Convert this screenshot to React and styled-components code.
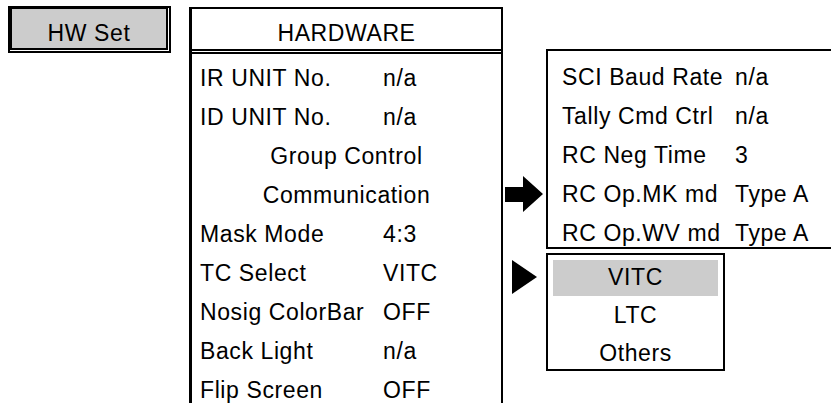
import React from 'react';
import styled, { createGlobalStyle } from 'styled-components';

const GlobalStyle = createGlobalStyle`
  html, body {
    margin: 0;
    padding: 0;
    background: #ffffff;
    overflow: hidden;
  }
  body {
    font-family: 'Liberation Sans', Arial, sans-serif;
    color: #000000;
  }
`;

const Page = styled.div`
  display: flex;
  align-items: flex-start;
  width: 831px;
  height: 403px;
  box-sizing: border-box;
  padding: 6px 0 0 8px;
  overflow: hidden;
  font-size: 23px;
  letter-spacing: 0.6px;
`;

const SetButton = styled.div`
  flex-shrink: 0;
  width: 163px;
  height: 47px;
  box-sizing: border-box;
  border: 2px solid #000;
  padding: 0 1px 1px 0;
  background: #ffffff;
`;

const SetFace = styled.div`
  height: 100%;
  box-sizing: border-box;
  border-style: solid;
  border-color: #000;
  border-width: 1px 2px 2px 2px;
  background: #cccccc;
  padding-top: 9px;
  line-height: 30px;
  text-align: center;
`;

const Panel = styled.section`
  flex-shrink: 0;
  width: 314px;
  margin: 1px 0 0 18px;
  box-sizing: border-box;
  border: 2px solid #000;
  border-left-width: 3px;
`;

const PanelHead = styled.div`
  height: 45px;
  box-sizing: border-box;
  padding-top: 8px;
  line-height: 32px;
  text-align: center;
  border-bottom: 5px double #000;
`;

const PanelBody = styled.div`
  padding-top: 5px;
`;

const Row = styled.div`
  display: flex;
  height: 39px;
  line-height: 39px;
  white-space: nowrap;
  padding-left: ${(p) => p.$indent || 0}px;
  justify-content: ${(p) => (p.$center ? 'center' : 'flex-start')};
`;

const Label = styled.span`
  flex-shrink: 0;
  width: ${(p) => p.$width}px;
`;

const Value = styled.span``;

const RightColumn = styled.div`
  display: flex;
  flex-direction: column;
  margin-top: 43px;
`;

const Group = styled.div`
  display: flex;
  align-items: flex-start;
  margin-bottom: ${(p) => p.$gap || 0}px;
`;

const MarkerCol = styled.div`
  flex-shrink: 0;
  width: 43px;
  display: flex;
  flex-direction: column;
  padding-top: ${(p) => p.$top}px;
`;

const Slot = styled.div`
  height: ${(p) => p.$h}px;
  display: flex;
  align-items: center;
  padding-left: ${(p) => p.$left || 0}px;
`;

const SubBox = styled.div`
  flex-shrink: 0;
  width: 300px;
  height: 200px;
  box-sizing: border-box;
  border: 2px solid #000;
  padding: 7px 0 0 14px;
`;

const Dropdown = styled.div`
  flex-shrink: 0;
  width: 179px;
  height: 118px;
  box-sizing: border-box;
  border: 2px solid #000;
  padding: 5px;
  display: flex;
  flex-direction: column;
  gap: 2px;
`;

const Option = styled.div`
  flex-shrink: 0;
  height: 36px;
  line-height: 35px;
  text-align: center;
  background: ${(p) => (p.$active ? '#cccccc' : 'transparent')};
`;

const BlockArrow = () => (
  <svg width="38" height="36" viewBox="0 0 38 36">
    <path d="M0 11 H18 V0 L38 18 L18 36 V26 H0 Z" fill="#000" />
  </svg>
);

const Triangle = () => (
  <svg width="25" height="34" viewBox="0 0 25 34">
    <path d="M0 0 L25 17 L0 34 Z" fill="#000" />
  </svg>
);

const hardware = [
  { label: 'IR UNIT No.', value: 'n/a' },
  { label: 'ID UNIT No.', value: 'n/a' },
  { label: 'Group Control', center: true },
  { label: 'Communication', center: true },
  { label: 'Mask Mode', value: '4:3' },
  { label: 'TC Select', value: 'VITC' },
  { label: 'Nosig ColorBar', value: 'OFF' },
  { label: 'Back Light', value: 'n/a' },
  { label: 'Flip Screen', value: 'OFF' },
];

const communication = [
  { label: 'SCI Baud Rate', value: 'n/a' },
  { label: 'Tally Cmd Ctrl', value: 'n/a' },
  { label: 'RC Neg Time', value: '3' },
  { label: 'RC Op.MK md', value: 'Type A' },
  { label: 'RC Op.WV md', value: 'Type A' },
];

const tcOptions = ['VITC', 'LTC', 'Others'];

const App = () => {
  return (
    <>
      <GlobalStyle />
      <Page>
        <SetButton>
          <SetFace>HW Set</SetFace>
        </SetButton>

        <Panel>
          <PanelHead>HARDWARE</PanelHead>
          <PanelBody>
            {hardware.map((item) =>
              item.center ? (
                <Row key={item.label} $center>
                  {item.label}
                </Row>
              ) : (
                <Row key={item.label} $indent={8}>
                  <Label $width={183}>{item.label}</Label>
                  <Value>{item.value}</Value>
                </Row>
              )
            )}
          </PanelBody>
        </Panel>

        <RightColumn>
          <Group $gap={1}>
            <MarkerCol $top={8}>
              {communication.map((item, i) => (
                <Slot key={item.label} $h={39} $left={2}>
                  {i === 3 && <BlockArrow />}
                </Slot>
              ))}
            </MarkerCol>
            <SubBox>
              {communication.map((item) => (
                <Row key={item.label}>
                  <Label $width={173}>{item.label}</Label>
                  <Value>{item.value}</Value>
                </Row>
              ))}
            </SubBox>
          </Group>

          <Group>
            <MarkerCol $top={6}>
              <Slot $h={36} $left={9}>
                <Triangle />
              </Slot>
            </MarkerCol>
            <Dropdown>
              {tcOptions.map((opt, i) => (
                <Option key={opt} $active={i === 0}>
                  {opt}
                </Option>
              ))}
            </Dropdown>
          </Group>
        </RightColumn>
      </Page>
    </>
  );
};

export default App;
